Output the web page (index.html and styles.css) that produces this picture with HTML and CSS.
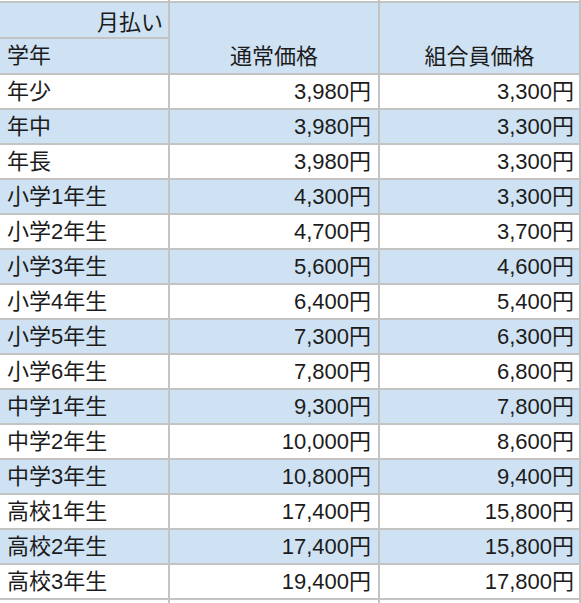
FILE: index.html
```html
<!DOCTYPE html>
<html lang="ja">
<head>
<meta charset="utf-8">
<title>月払い 料金表</title>
<link rel="stylesheet" href="styles.css">
</head>
<body>
<div class="sheet">
  <div class="cell edge"></div><div class="cell edge"></div><div class="cell edge"></div>

  <div class="cell hd r1 right">月払い</div>
  <div class="cell hd merged">通常価格</div>
  <div class="cell hd merged">組合員価格</div>
  <div class="cell hd r2">学年</div>

  <div class="cell">年少</div><div class="cell num c2">3,980円</div><div class="cell num c3">3,300円</div>
  <div class="cell b">年中</div><div class="cell b num c2">3,980円</div><div class="cell b num c3">3,300円</div>
  <div class="cell">年長</div><div class="cell num c2">3,980円</div><div class="cell num c3">3,300円</div>
  <div class="cell b">小学1年生</div><div class="cell b num c2">4,300円</div><div class="cell b num c3">3,300円</div>
  <div class="cell">小学2年生</div><div class="cell num c2">4,700円</div><div class="cell num c3">3,700円</div>
  <div class="cell b">小学3年生</div><div class="cell b num c2">5,600円</div><div class="cell b num c3">4,600円</div>
  <div class="cell">小学4年生</div><div class="cell num c2">6,400円</div><div class="cell num c3">5,400円</div>
  <div class="cell b">小学5年生</div><div class="cell b num c2">7,300円</div><div class="cell b num c3">6,300円</div>
  <div class="cell">小学6年生</div><div class="cell num c2">7,800円</div><div class="cell num c3">6,800円</div>
  <div class="cell b">中学1年生</div><div class="cell b num c2">9,300円</div><div class="cell b num c3">7,800円</div>
  <div class="cell">中学2年生</div><div class="cell num c2">10,000円</div><div class="cell num c3">8,600円</div>
  <div class="cell b">中学3年生</div><div class="cell b num c2">10,800円</div><div class="cell b num c3">9,400円</div>
  <div class="cell">高校1年生</div><div class="cell num c2">17,400円</div><div class="cell num c3">15,800円</div>
  <div class="cell b">高校2年生</div><div class="cell b num c2">17,400円</div><div class="cell b num c3">15,800円</div>
  <div class="cell">高校3年生</div><div class="cell num c2">19,400円</div><div class="cell num c3">17,800円</div>

  <div class="cell edge"></div><div class="cell edge"></div><div class="cell edge"></div>
</div>
</body>
</html>
```

FILE: styles.css
```css
html, body {
  margin: 0;
  padding: 0;
  background: #ffffff;
}

body {
  width: 581px;
  height: 603px;
  overflow: hidden;
}

.sheet {
  display: grid;
  grid-template-columns: 168px 208px 199px;
  grid-template-rows: 1px 34px 34px repeat(15, 33px) 10px;
  column-gap: 2px;
  row-gap: 2px;
  padding-right: 2px;
  background: #c3c3c3;
  width: 579px;
  font-family: "Liberation Sans", "Noto Sans CJK JP", sans-serif;
  font-size: 22px;
  line-height: 26px;
  color: #1c1c1c;
}

.cell {
  background: #ffffff;
  display: flex;
  align-items: center;
  padding: 0 7px;
  white-space: nowrap;
  overflow: hidden;
}

.cell.b,
.cell.hd {
  background: #cfe2f3;
}

.edge {
  padding: 0;
}

.r1 {
  grid-column: 1;
  grid-row: 2;
  align-items: flex-end;
  padding-bottom: 1px;
}

.r2 {
  grid-column: 1;
  grid-row: 3;
}

.right {
  justify-content: flex-end;
  padding-right: 5px;
}

.merged {
  grid-row: 2 / span 2;
  justify-content: center;
  align-items: flex-end;
  padding-bottom: 3px;
}

.num {
  justify-content: flex-end;
}

.c2 {
  padding-right: 7px;
}

.c3 {
  padding-right: 5px;
}
```
